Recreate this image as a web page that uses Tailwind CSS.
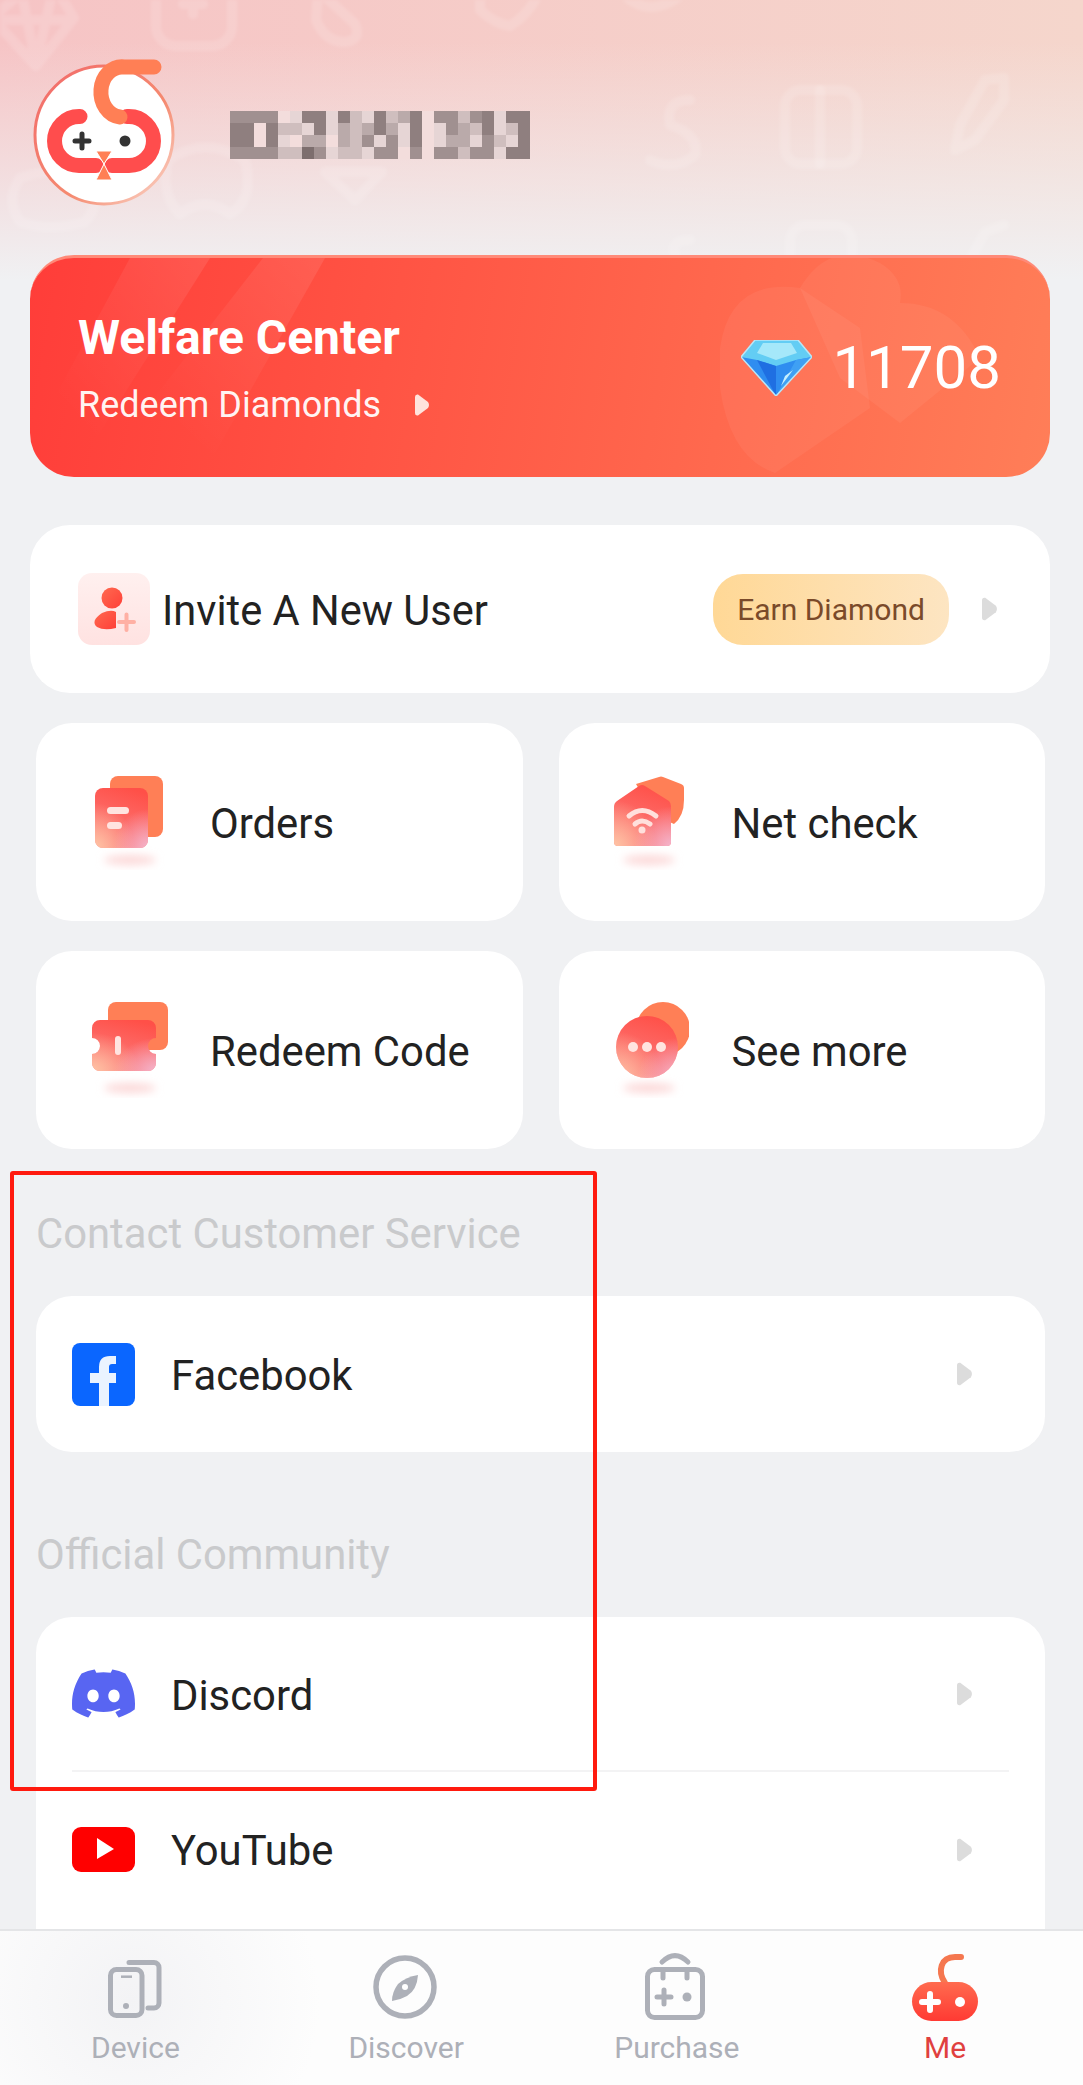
<!DOCTYPE html>
<html lang="en">
<head>
    <meta charset="UTF-8">
    <meta name="viewport" content="width=device-width, initial-scale=1.0">
    <title>Me</title>
    <script src="https://cdn.jsdelivr.net/npm/@tailwindcss/browser@4"></script>
</head>
<body class="bg-[#f0f1f3]">
<svg class="absolute w-0 h-0">
    <defs>
        <linearGradient id="g1" x1="0.65" y1="0" x2="0.35" y2="1"><stop offset="0" stop-color="#ff5048"/><stop offset="1" stop-color="#fb7f80"/></linearGradient>
        <radialGradient id="g2" cx="0" cy="1" r="0.75"><stop offset="0" stop-color="#ffc4a4"/><stop offset="1" stop-color="#ffc4a4" stop-opacity="0"/></radialGradient>
        <radialGradient id="g3" cx="1" cy="1" r="0.65"><stop offset="0" stop-color="#f4b4cc"/><stop offset="1" stop-color="#f4b4cc" stop-opacity="0"/></radialGradient>
        <linearGradient id="meBody" x1="0" y1="0" x2="0" y2="1"><stop offset="0" stop-color="#ff6b4f"/><stop offset="1" stop-color="#ff3a33"/></linearGradient>
        <linearGradient id="ring" x1="0" y1="0" x2="1" y2="1"><stop offset="0" stop-color="#f26a6a"/><stop offset="0.6" stop-color="#f58a70"/><stop offset="1" stop-color="#fbdcd0"/></linearGradient>
        <linearGradient id="inviteUser" x1="0" y1="0" x2="1" y2="1"><stop offset="0" stop-color="#ff6a50"/><stop offset="1" stop-color="#ff3f38"/></linearGradient>
        <linearGradient id="inviteTile" x1="0" y1="0" x2="0" y2="1"><stop offset="0" stop-color="#fff0ef"/><stop offset="1" stop-color="#ffe2e1"/></linearGradient>
        <linearGradient id="streak" x1="1" y1="0" x2="0" y2="1"><stop offset="0" stop-color="#fff" stop-opacity="0.09"/><stop offset="0.7" stop-color="#fff" stop-opacity="0"/></linearGradient>
        <filter id="soft" x="-30%" y="-100%" width="160%" height="300%"><feGaussianBlur stdDeviation="4"/></filter>
        <filter id="faint" x="-5%" y="-5%" width="110%" height="110%"><feGaussianBlur stdDeviation="1.500"/></filter>
    </defs>
</svg>

<div class="relative w-[1083px] h-[2085px] overflow-hidden flex flex-col text-[#222] font-['Roboto',sans-serif]">
    <!-- header backdrop -->
    <div class="absolute top-0 left-0 w-full h-[280px] bg-[linear-gradient(to_bottom,transparent_0%,transparent_15%,#f0f1f3_100%),linear-gradient(to_right,#f6c4c5,#f5d6cc)]">
        <svg width="1083" height="280" fill="none" stroke="#fff" stroke-opacity="0.13" stroke-width="10" stroke-linejoin="round" stroke-linecap="round" filter="url(#faint)">
            <path d="M-8 18 L22 -8 H58 L74 18 L36 66 Z M-6 20 H72 M22 -6 L36 64 L52 -6"/>
            <rect x="156" y="-30" width="76" height="76" rx="20"/>
            <path d="M183 4 H203 M193 -6 V14"/>
            <path d="M318 -10 L355 24 Q362 40 345 42 Q325 42 316 20 Z"/>
            <path d="M480 -10 V10 Q495 24 510 26 Q530 14 540 -10"/>
            <path d="M625 -4 Q650 18 680 -4"/>
            <path d="M690 100 Q665 100 670 125 Q700 135 695 155 Q675 172 650 160"/>
            <rect x="785" y="90" width="72" height="74" rx="16"/>
            <path d="M820 90 V164"/>
            <path d="M1004 78 L985 80 L960 125 L955 150 L975 140 L1004 100 Z"/>
            <path d="M20 178 Q60 165 85 178 Q105 200 85 222 Q50 232 20 222 Q5 200 20 178Z"/>
            <path d="M168 160 Q205 135 245 160 Q255 200 230 214 Q205 195 180 214 Q160 195 168 160Z"/>
            <path d="M325 172 L382 172 L355 200 Z"/>
            <path d="M690 240 Q670 240 675 254"/>
            <rect x="790" y="225" width="62" height="60" rx="16"/>
            <path d="M1004 225 L985 232 L965 270"/>
        </svg>
    </div>

    <main class="relative flex-1 overflow-hidden">
        <div class="flex items-start gap-[51px] pt-[55px] pl-[29px] h-[255px]">
            <svg width="150" height="155" viewBox="30 55 150 155" fill="none">
                <circle cx="105" cy="135" r="69" fill="#fff" stroke="url(#ring)" stroke-width="3"/>
                <path d="M81 116.500 H80 a24.500 24.500 0 0 0 0 49 H97" stroke="#ff4d4d" stroke-width="15" stroke-linecap="round"/>
                <path d="M128 116.500 H130 a24.500 24.500 0 0 1 0 49 H113" stroke="#ff4d4d" stroke-width="15" stroke-linecap="round"/>
                <path d="M155 67 H125 a21 25 0 0 0 -4 50" stroke="#ff7f55" stroke-width="15" stroke-linecap="round"/>
                <path d="M97 151 H113 L105 164 L113 180 H97 L105 164 Z" fill="#ff7f55" stroke="#fff" stroke-width="1"/>
                <path d="M76 141 H90 M83 134 V148" stroke="#333" stroke-width="5" stroke-linecap="round"/>
                <circle cx="126" cy="141" r="5.500" fill="#333"/>
            </svg>
            <svg id="mosaic" class="mt-[56px]" width="300" height="48"></svg>
        </div>

        <!-- welfare -->
        <div class="relative ml-[30px] mr-[33px] h-[222px] rounded-[44px] overflow-hidden flex justify-between bg-[linear-gradient(100deg,#ff3d39,#ff7e58)] border-t-[3px] border-[#ff8a78]">
            <svg class="absolute top-0 left-0" width="1022" height="222" fill="none">
                <path d="M233 0 H295 L170 222 H60 Z" fill="url(#streak)"/>
                <path d="M100 0 H180 L40 222 H-20 Z" fill="url(#streak)"/>
                <path d="M690 90 Q700 20 770 30 L830 70 L840 150 L745 215 Q700 200 690 130 Z" fill="#fff" fill-opacity="0.05"/>
                <path d="M770 30 Q800 -20 850 5 Q875 20 870 45 Q925 45 950 100 L870 165 L810 120 Z" fill="#fff" fill-opacity="0.05"/>
            </svg>
            <div class="relative pl-[48px] pt-[52px]">
                <div class="text-[48px] leading-[56px] font-bold text-white">Welfare Center</div>
                <div class="mt-[17px] flex items-center gap-[34px] text-[36px] leading-[44px] text-white/95">
                    <span>Redeem Diamonds</span>
                    <svg width="15" height="22" viewBox="0 0 15 22"><path d="M3 .5 L13 8 Q15 11 13 14 L3 21.500 Q0 22 0 19 V3 Q0 0 3 .5Z" fill="#ffe3dc"/></svg>
                </div>
            </div>
            <div class="relative flex items-center gap-[20px] pr-[49px]">
                <svg width="71" height="56" viewBox="0 0 71 56">
                    <path d="M14 0 H57 L71 17 L35 56 L0 17 Z" fill="#2f8df0"/>
                    <path d="M14 0 H57 L71 17 L55 20 L35 26 L16 20 L0 17 Z" fill="#63cdf4"/>
                    <path d="M22 3 H50 L56 13 L35 20 L16 13 Z" fill="#a5e8fa"/>
                    <path d="M16 20 L35 26 L35 56 Z" fill="#1f6fe2"/>
                    <path d="M55 20 L71 17 L35 56 Z" fill="#3fa0f4"/>
                    <path d="M44 36 L52 30 L40 46 Z" fill="#c6f0ff"/>
                    <path d="M14 0 H57 L71 17 L35 56 L0 17 Z" fill="none" stroke="#b9e6f7" stroke-width="1.500"/>
                </svg>
                <span class="text-[60px] leading-none text-white">11708</span>
            </div>
        </div>

        <!-- invite -->
        <div class="ml-[30px] mr-[33px] mt-[48px] h-[168px] rounded-[40px] bg-white flex items-center pl-[48px] pr-[52px]">
            <svg width="72" height="72" viewBox="0 0 72 72" fill="none" class="shrink-0">
                <rect width="72" height="72" rx="14" fill="url(#inviteTile)"/>
                <circle cx="34" cy="25" r="10.500" fill="url(#inviteUser)"/>
                <path d="M24 40 Q33 36 38 39 V55 Q26 58 19 54 Q12 48 24 40Z" fill="url(#inviteUser)"/>
                <path d="M41 49 H56 M48.500 41.500 V57" stroke="#ffb0a4" stroke-width="4" stroke-linecap="round"/>
            </svg>
            <span class="ml-[12px] mt-[3px] text-[41.6px] leading-none">Invite A New User</span>
            <span class="ml-auto h-[71px] w-[236px] rounded-[30px] bg-[linear-gradient(to_right,#ffd896,#fde5c2)] text-[#7a4a2a] text-[30px] flex items-center justify-center">Earn Diamond</span>
            <svg class="ml-[33px]" width="16" height="24" viewBox="0 0 15 22"><path d="M3 .5 L13 8 Q15 11 13 14 L3 21.500 Q0 22 0 19 V3 Q0 0 3 .5Z" fill="#dcdcdc"/></svg>
        </div>

        <!-- shortcuts -->
        <div class="grid grid-cols-2 gap-x-[36px] gap-y-[30px] ml-[36px] mr-[38px] mt-[30px]">
            <div class="h-[198px] rounded-[36px] bg-white flex items-center pl-[54px] gap-[40px]">
                <svg width="80" height="100" viewBox="0 0 80 100" class="mb-[4px] shrink-0">
                    <defs><rect id="ordersFront" x="5" y="18" width="53" height="60" rx="8"/></defs>
                    <rect x="20" y="6" width="53" height="61" rx="8" fill="#ff7f56"/>
                    <use href="#ordersFront" fill="url(#g1)"/><use href="#ordersFront" fill="url(#g2)"/><use href="#ordersFront" fill="url(#g3)"/>
                    <rect x="17" y="37" width="22" height="7" rx="3.500" fill="#ffe4e0"/>
                    <rect x="17" y="52" width="15" height="7" rx="3.500" fill="#ffe4e0"/>
                    <ellipse cx="40" cy="90" rx="26" ry="5" fill="#fcd8d8" filter="url(#soft)"/>
                </svg>
                <span class="mt-[3px] text-[41.8px] leading-none">Orders</span>
            </div>
            <div class="h-[198px] rounded-[36px] bg-white flex items-center pl-[50px] gap-[43px]">
                <svg width="80" height="100" viewBox="0 0 80 100" class="mb-[4px] shrink-0" fill="none">
                    <defs><path id="netFront" d="M5 37 Q5 33 8 31 L30 16 Q33 14 36 16 L60 31 Q62 33 62 36 L62 72 Q62 76 58 76 L9 76 Q5 76 5 72Z"/></defs>
                    <path d="M27 14 L50 7 Q52 6 54 7 L72 14 Q75 15 75 18 V30 Q75 46 65 54 L45 45 Z" fill="#ff7f56"/>
                    <use href="#netFront" fill="url(#g1)"/><use href="#netFront" fill="url(#g2)"/><use href="#netFront" fill="url(#g3)"/>
                    <path d="M20 46 Q33 35 47 46 M26 54 Q33 48 41 54" stroke="#ffe0dc" stroke-width="5" stroke-linecap="round"/>
                    <circle cx="33" cy="60" r="3.500" fill="#ffe0dc"/>
                    <ellipse cx="40" cy="90" rx="26" ry="5" fill="#fcd8d8" filter="url(#soft)"/>
                </svg>
                <span class="mt-[3px] text-[41.8px] leading-none">Net check</span>
            </div>
            <div class="h-[198px] rounded-[36px] bg-white flex items-center pl-[54px] gap-[40px]">
                <svg width="80" height="100" viewBox="0 0 80 100" class="mb-[4px] shrink-0">
                    <defs><path id="redeemFront" d="M10 22 H58 a8 8 0 0 1 8 8 V40 a8 8 0 0 0 0 16 V65 a8 8 0 0 1 -8 8 H10 a8 8 0 0 1 -8 -8 V56 a8 8 0 0 0 0 -16 V30 a8 8 0 0 1 8 -8Z"/></defs>
                    <rect x="18" y="4" width="60" height="48" rx="8" fill="#ff7f56"/>
                    <use href="#redeemFront" fill="url(#g1)"/><use href="#redeemFront" fill="url(#g2)"/><use href="#redeemFront" fill="url(#g3)"/>
                    <rect x="25" y="38" width="6" height="19" rx="3" fill="#ffe4e0"/>
                    <ellipse cx="40" cy="90" rx="26" ry="5" fill="#fcd8d8" filter="url(#soft)"/>
                </svg>
                <span class="mt-[3px] text-[41.8px] leading-none">Redeem Code</span>
            </div>
            <div class="h-[198px] rounded-[36px] bg-white flex items-center pl-[50px] gap-[43px]">
                <svg width="80" height="100" viewBox="0 0 80 100" class="mb-[4px] shrink-0">
                    <defs><circle id="moreFront" cx="38" cy="49" r="31"/></defs>
                    <circle cx="54" cy="31" r="27" fill="#ff7f56"/>
                    <use href="#moreFront" fill="url(#g1)"/><use href="#moreFront" fill="url(#g2)"/><use href="#moreFront" fill="url(#g3)"/>
                    <circle cx="24" cy="49" r="5" fill="#ffe4e0"/><circle cx="38" cy="49" r="5" fill="#ffe4e0"/><circle cx="52" cy="49" r="5" fill="#ffe4e0"/>
                    <ellipse cx="40" cy="90" rx="26" ry="5" fill="#fcd8d8" filter="url(#soft)"/>
                </svg>
                <span class="mt-[3px] text-[41.8px] leading-none">See more</span>
            </div>
        </div>

        <!-- contact -->
        <div class="mx-[36px] mt-[61px] text-[41.8px] leading-[48px] text-[#c9cacc]">Contact Customer Service</div>
        <div class="ml-[36px] mr-[38px] mt-[38px] h-[156px] rounded-[36px] bg-white flex items-center pl-[36px] pr-[72px] gap-[36px]">
            <svg width="63" height="63" viewBox="0 0 63 63" class="shrink-0">
                <rect width="63" height="63" rx="8" fill="#0a66ff"/>
                <path d="M37 63 V40 H44 V30 H37 V24 Q37 21 40 21 H44 V13 H38 Q27 13 27 24 V30 H18 V40 H27 V63Z" fill="#eaf3ff"/>
            </svg>
            <span class="mt-[3px] text-[41.8px] leading-none">Facebook</span>
            <svg class="ml-auto" width="16" height="24" viewBox="0 0 15 22"><path d="M3 .5 L13 8 Q15 11 13 14 L3 21.500 Q0 22 0 19 V3 Q0 0 3 .5Z" fill="#dcdcdc"/></svg>
        </div>

        <!-- community -->
        <div class="mx-[36px] mt-[79px] text-[41.8px] leading-[48px] text-[#c9cacc]">Official Community</div>
        <div class="ml-[36px] mr-[38px] mt-[38px] h-[400px] rounded-[36px] bg-white pl-[36px] pr-[36px]">
            <div class="h-[155px] flex items-center gap-[36px] border-b-2 border-[#f3f3f4] pr-[36px]">
                <svg width="63" height="63" viewBox="0 0 24 24" class="shrink-0"><path fill="#5865f2" d="M20.317 4.3698a19.7913 19.7913 0 00-4.8851-1.5152.0741.0741 0 00-.0785.0371c-.211.3753-.4447.8648-.6083 1.2495-1.8447-.2762-3.68-.2762-5.4868 0-.1636-.3933-.4058-.8742-.6177-1.2495a.077.077 0 00-.0785-.037 19.7363 19.7363 0 00-4.8852 1.515.0699.0699 0 00-.0321.0277C.5334 9.0458-.319 13.5799.0992 18.0578a.0824.0824 0 00.0312.0561c2.0528 1.5076 4.0413 2.4228 5.9929 3.0294a.0777.0777 0 00.0842-.0276c.4616-.6304.8731-1.2952 1.226-1.9942a.076.076 0 00-.0416-.1057c-.6528-.2476-1.2743-.5495-1.8722-.8923a.077.077 0 01-.0076-.1277c.1258-.0943.2517-.1923.3718-.2914a.0743.0743 0 01.0776-.0105c3.9278 1.7933 8.18 1.7933 12.0614 0a.0739.0739 0 01.0785.0095c.1202.099.246.1981.3728.2924a.077.077 0 01-.0066.1276 12.2986 12.2986 0 01-1.873.8914.0766.0766 0 00-.0407.1067c.3604.698.7719 1.3628 1.225 1.9932a.076.076 0 00.0842.0286c1.961-.6067 3.9495-1.5219 6.0023-3.0294a.077.077 0 00.0313-.0552c.5004-5.177-.8382-9.6739-3.5485-13.6604a.061.061 0 00-.0312-.0286zM8.02 15.3312c-1.1825 0-2.1569-1.0857-2.1569-2.419 0-1.3332.9555-2.4189 2.157-2.4189 1.2108 0 2.1757 1.0952 2.1568 2.419 0 1.3332-.9555 2.4189-2.1569 2.4189zm7.9748 0c-1.1825 0-2.1569-1.0857-2.1569-2.419 0-1.3332.9554-2.4189 2.1569-2.4189 1.2108 0 2.1757 1.0952 2.1568 2.419 0 1.3332-.946 2.4189-2.1568 2.4189Z"/></svg>
                <span class="mt-[4px] text-[41.8px] leading-none">Discord</span>
                <svg class="ml-auto" width="16" height="24" viewBox="0 0 15 22"><path d="M3 .5 L13 8 Q15 11 13 14 L3 21.500 Q0 22 0 19 V3 Q0 0 3 .5Z" fill="#dcdcdc"/></svg>
            </div>
            <div class="h-[155px] flex items-center gap-[36px] pr-[36px]">
                <svg width="63" height="45" viewBox="0 0 63 45" class="shrink-0">
                    <rect width="63" height="45" rx="9" fill="#ff0000"/>
                    <path d="M25 11 L42 22 L25 32 Z" fill="#fff"/>
                </svg>
                <span class="mt-[3px] text-[41.8px] leading-none">YouTube</span>
                <svg class="ml-auto" width="16" height="24" viewBox="0 0 15 22"><path d="M3 .5 L13 8 Q15 11 13 14 L3 21.500 Q0 22 0 19 V3 Q0 0 3 .5Z" fill="#dcdcdc"/></svg>
            </div>
        </div>
    </main>

    <!-- tab bar -->
    <nav class="relative h-[156px] shrink-0 border-t-2 border-[#e4e5e7] grid grid-cols-4 pt-[18px] text-[30px] leading-[36px] text-[#adb0b8] bg-[radial-gradient(circle_at_130px_70px,#f3f3f5,#fdfdfd_190px)]">
        <div class="flex flex-col items-center gap-[6px]">
            <svg width="80" height="75" viewBox="0 0 80 75" fill="none" stroke="#adb0b8" stroke-width="5">
                <rect x="15.500" y="20.500" width="31.500" height="46" rx="6"/>
                <path d="M34 13.500 H59 a5 5 0 0 1 5 5 V54 a5 5 0 0 1 -5 5 H53" stroke-linecap="round"/>
                <path d="M26 27.700 H37" stroke-width="2.500"/>
                <circle cx="31" cy="57" r="3" fill="#adb0b8" stroke="none"/>
            </svg>
            <span>Device</span>
        </div>
        <div class="flex flex-col items-center gap-[6px]">
            <svg width="80" height="75" viewBox="0 0 80 75" fill="none">
                <circle cx="39" cy="38" r="29" stroke="#adb0b8" stroke-width="5.500"/>
                <path d="M52 26 Q51 41 41 47 Q34 51 26 52 Q26 43 32 35 Q40 28 52 26Z" fill="#adb0b8"/>
                <circle cx="39" cy="38" r="3" fill="#fff"/>
            </svg>
            <span>Discover</span>
        </div>
        <div class="flex flex-col items-center gap-[6px]">
            <svg width="80" height="75" viewBox="0 0 80 75" fill="none" stroke="#adb0b8" stroke-width="5" stroke-linecap="round">
                <rect x="10.500" y="20.500" width="55" height="48" rx="7"/>
                <path d="M25 13 Q38 0 51 13"/>
                <path d="M26 21 V29 M50 21 V29"/>
                <path d="M20 48 H34 M27 41 V55"/>
                <circle cx="50" cy="48" r="4.500" fill="#adb0b8" stroke="none"/>
            </svg>
            <span>Purchase</span>
        </div>
        <div class="flex flex-col items-center gap-[6px] pr-[5px] text-[#e0403f]">
            <svg width="80" height="75" viewBox="-2 0 80 75" fill="none">
                <path d="M38 34 C30 22 34 8 48 8 L54 8" stroke="#f5774f" stroke-width="6" stroke-linecap="round"/>
                <rect x="5" y="33" width="66" height="39" rx="19.500" fill="url(#meBody)"/>
                <path d="M15 53 H31 M23 45 V61" stroke="#fff" stroke-width="6" stroke-linecap="round"/>
                <circle cx="53" cy="53" r="5" fill="#fff"/>
            </svg>
            <span>Me</span>
        </div>
    </nav>

    <!-- annotation drawn over the screenshot -->
    <div class="absolute left-[10px] top-[1171px] w-[587px] h-[620px] border-[4px] border-[#ff1a0e] rounded-[3px]"></div>
</div>

<script>
    // blurred account name, one shade per mosaic cell
    const shades = { a: '#8f7f7f', b: '#a09090', c: '#baaaaa', d: '#cfbebe', e: '#e6d5d5', f: '#f3dddc', k: '#7d6e6e' };
    const rows = [
        'bbbbfeaaeadeadcafbbdbaeaa',
        'aafaddeaecdcaceafebcdaeda',
        'aafaefccfcdbebeafeccebdea',
        'bbbbddkbeddebbfbfbbdbbeaa'
    ];
    let cells = '';
    rows.forEach((row, y) => {
        [...row].forEach((c, x) => {
            cells += `<rect x="${x * 12}" y="${y * 12}" width="12" height="12" fill="${shades[c]}"/>`;
        });
    });
    document.getElementById('mosaic').innerHTML = cells;
</script>
</body>
</html>
